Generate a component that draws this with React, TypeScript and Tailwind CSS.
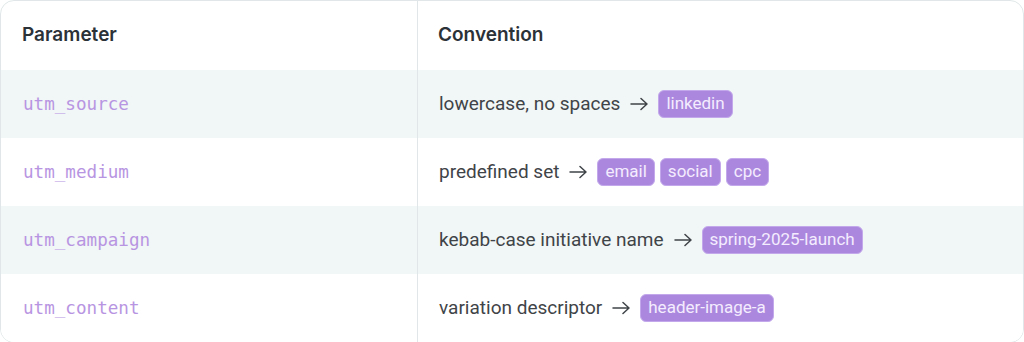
const rows = [
  { param: 'utm_source', text: 'lowercase, no spaces', tags: ['linkedin'] },
  { param: 'utm_medium', text: 'predefined set', tags: ['email', 'social', 'cpc'] },
  { param: 'utm_campaign', text: 'kebab-case initiative name', tags: ['spring-2025-launch'] },
  { param: 'utm_content', text: 'variation descriptor', tags: ['header-image-a'] },
]

const Tag = ({ label }: { label: string }) => (
  <span className="inline-flex h-[28px] items-center rounded-[6px] border border-[#c3a9ec] bg-[#ab88dd] px-[7px] text-[17px] text-[#f4ecff]">
    {label}
  </span>
)

const Arrow = () => (
  <svg width="18" height="14" viewBox="0 0 18 14" fill="none" stroke="#3f4448" strokeWidth="1.5" strokeLinecap="round" strokeLinejoin="round" className="mx-[10px] shrink-0">
    <path d="M1 7h16M11 1.5 17 7l-6 5.5" />
  </svg>
)

export default function App() {
  return (
    <div className="h-[342px] w-[1024px] bg-white font-['Roboto',sans-serif]">
      <div className="overflow-hidden rounded-[14px] border border-[#e1e7e8]">
        <div className="grid h-[69px] grid-cols-[417px_1fr] items-center">
          <div className="h-full border-r border-[#e1e7e8] pl-[21px] flex items-center font-['Inter',sans-serif] text-[19px] font-semibold text-[#2b3238]">
            Parameter
          </div>
          <div className="pl-[20px] font-['Inter',sans-serif] text-[19px] font-semibold text-[#2b3238]">Convention</div>
        </div>
        {rows.map((r, i) => (
          <div
            key={r.param}
            className={`grid h-[68px] grid-cols-[417px_1fr] ${i % 2 === 0 ? 'bg-[#f1f6f6]' : 'bg-white'}`}
          >
            <div className="flex items-center border-r border-[#e1e7e8] pl-[22px] font-['DejaVu_Sans_Mono',monospace] text-[17.6px] text-[#b895e2]">
              {r.param}
            </div>
            <div className="flex items-center pl-[21px] text-[19px] text-[#3f4448]">
              <span>{r.text}</span>
              <Arrow />
              <div className="flex gap-[5px]">
                {r.tags.map(t => (
                  <Tag key={t} label={t} />
                ))}
              </div>
            </div>
          </div>
        ))}
      </div>
    </div>
  )
}
